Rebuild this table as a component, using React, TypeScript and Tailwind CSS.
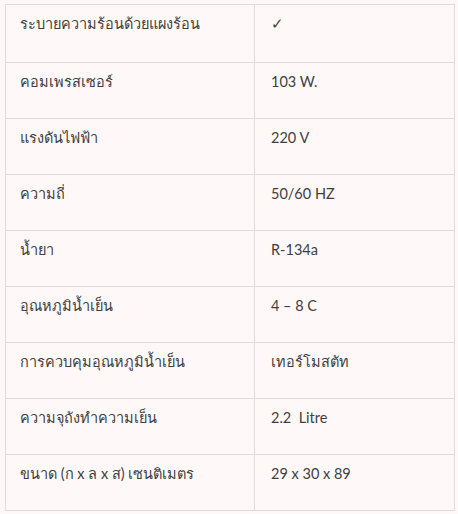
const rows: [string, string][] = [
  ["ระบายความร้อนด้วยแผงร้อน", "✓"],
  ["คอมเพรสเซอร์", "103 W."],
  ["แรงดันไฟฟ้า", "220 V"],
  ["ความถี่", "50/60 HZ"],
  ["น้ำยา", "R-134a"],
  ["อุณหภูมิน้ำเย็น", "4 – 8 C"],
  ["การควบคุมอุณหภูมิน้ำเย็น", "เทอร์โมสตัท"],
  ["ความจุถังทำความเย็น", "2.2  Litre"],
  ["ขนาด (ก x ล x ส) เซนติเมตร", "29 x 30 x 89"],
];

export default function App() {
  return (
    <div className="min-h-[514px] w-[458px] bg-[#fef9f8] pl-[5px] pt-[4px] font-['Lato','Noto_Sans',sans-serif] text-[14.5px] leading-[22px] text-[#404040]">
      <table className="w-[450px] border-collapse">
        <tbody>
          {rows.map(([label, value], i) => (
            <tr key={label} className={i === 0 ? "h-[58px]" : "h-[56px]"}>
              <td className="w-[249px] border border-[#dddddd] px-[14px] pt-[8px] align-top">
                {label}
              </td>
              <td className="whitespace-pre border border-[#dddddd] px-[16px] pt-[8px] align-top">
                {value}
              </td>
            </tr>
          ))}
        </tbody>
      </table>
    </div>
  );
}
